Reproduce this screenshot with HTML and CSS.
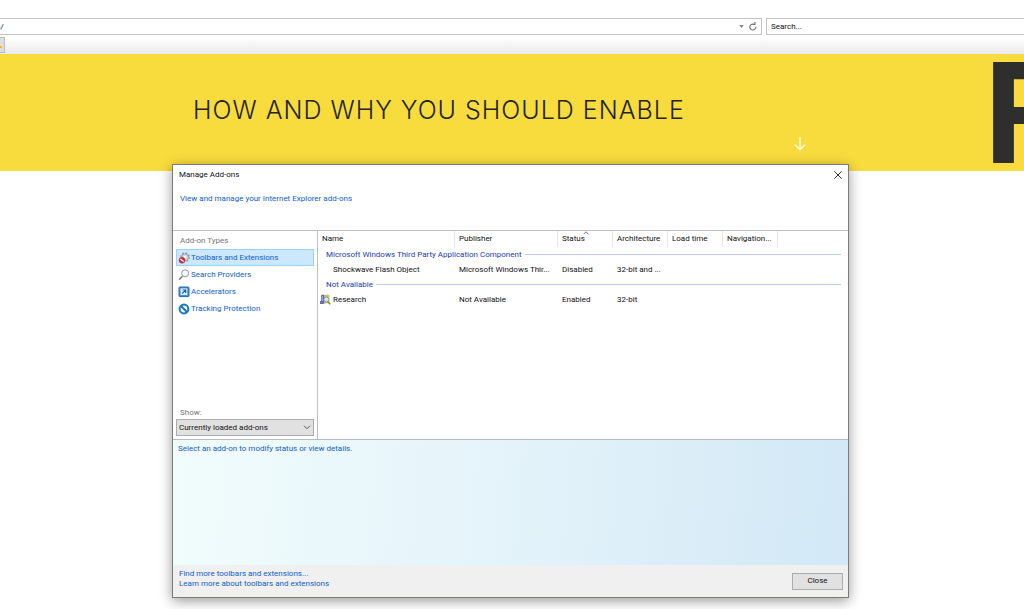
FILE: index.html
```
<!DOCTYPE html>
<html lang="en">
<head>
<meta charset="utf-8">
<title>Manage Add-ons</title>
<link rel="stylesheet" href="styles.css">
</head>
<body>
<header class="browser">
  <div class="bars">
    <div class="address">
      <input class="field address-input" type="text" value="n/" aria-label="Address">
      <button class="bar-button" type="button" aria-label="Show address history"><svg width="5" height="3" viewBox="0 0 6 4"><path d="M0 0h6L3 4z" fill="#858585"/></svg></button>
      <button class="bar-button" type="button" aria-label="Refresh"><svg width="8" height="9" viewBox="0 0 9 10" fill="none" stroke="#747474" stroke-width="1.3"><path d="M7.7 5.2A3.4 3.4 0 1 1 6 2.6"/><path d="M3.8 2.8h2.9V0" /></svg></button>
    </div>
    <input class="field search" type="text" value="Search..." aria-label="Search">
  </div>
  <div class="tabs"><button class="tab" type="button" aria-label="Tab"><span class="tab-mark"></span></button></div>
</header>
<main>
  <section class="hero">
    <h1 class="hero-title">HOW AND WHY YOU SHOULD ENABLE</h1>
    <svg class="hero-arrow" width="12" height="14" viewBox="0 0 12 14" fill="none" stroke="#fffbe0" stroke-width="1.5"><path d="M6 0v13M1 7.8l5 5 5-5"/></svg>
    <div class="hero-letter">F</div>
  </section>
</main>

<section class="dialog" role="dialog" aria-labelledby="dialog-title">
  <div class="titlebar">
    <h2 class="title" id="dialog-title">Manage Add-ons</h2>
    <button class="dismiss" type="button" aria-label="Close window"><svg width="8" height="8" viewBox="0 0 8 8" stroke="#333" stroke-width="1"><path d="M.3.3l7.4 7.4M7.7.3L.3 7.7"/></svg></button>
  </div>
  <div class="intro"><a href="#">View and manage your Internet Explorer add-ons</a></div>
  <div class="content">
    <nav class="sidebar">
      <h3 class="caption">Add-on Types</h3>
      <a class="type selected" href="#">
        <svg width="12" height="12" viewBox="0 0 12 12"><circle cx="7" cy="5.2" r="4.2" fill="none" stroke="#8b949b" stroke-width="1.4" stroke-dasharray="1.7 1.6"/><circle cx="7" cy="5.2" r="3.4" fill="#d5dadd" stroke="#899198" stroke-width=".8"/><circle cx="7" cy="5" r="1.2" fill="#fff"/><circle cx="4" cy="8.2" r="3" fill="#d42b31" stroke="#b9373f" stroke-width=".6"/><path d="M2.3 7l3.4 2.5" stroke="#fff" stroke-width="1.3"/></svg>
        Toolbars and Extensions</a>
      <a class="type" href="#">
        <svg width="12" height="12" viewBox="0 0 12 12"><path d="M4.6 7.1L1 10.6" stroke="#8b8581" stroke-width="1.7"/><circle cx="7.2" cy="4.3" r="3.5" fill="#f1f8fc" stroke="#8e989f" stroke-width="1"/><path d="M5.3 4.2A2 2 0 0 1 7.4 2.2" fill="none" stroke="#fff"/></svg>
        Search Providers</a>
      <a class="type" href="#">
        <svg width="12" height="12" viewBox="0 0 12 12"><rect x="1" y="1" width="10" height="9.6" rx="1" fill="#3e8fd7" stroke="#2267ad"/><rect x="2.5" y="2.4" width="6.8" height="6.6" fill="#dceffe"/><path d="M4 7.7l3.4-3.4M4.7 4h3v3" fill="none" stroke="#1761aa" stroke-width="1.2"/></svg>
        Accelerators</a>
      <a class="type" href="#">
        <svg width="12" height="12" viewBox="0 0 12 12"><circle cx="6" cy="6" r="4.4" fill="#f5fbff" stroke="#1477c4" stroke-width="2"/><path d="M3 3l6 6" stroke="#1477c4" stroke-width="2"/></svg>
        Tracking Protection</a>
      <label class="caption show" for="show">Show:</label>
      <div class="picker">
        <select id="show"><option>Currently loaded add-ons</option></select>
        <svg class="chevron" width="8" height="5" viewBox="0 0 8 5" fill="none" stroke="#555"><path d="M1 .7l3 3 3-3"/></svg>
      </div>
    </nav>
    <div class="list">
      <table>
        <colgroup><col class="c-name"><col class="c-publisher"><col class="c-short"><col class="c-short"><col class="c-short"><col class="c-short"><col></colgroup>
        <thead>
          <tr><th>Name</th><th>Publisher</th><th class="sorted">Status<svg class="sort" width="6" height="4" viewBox="0 0 6 4" fill="none" stroke="#777"><path d="M.5 3.3L3 .8l2.5 2.5"/></svg></th><th>Architecture</th><th>Load time</th><th>Navigation...</th><td></td></tr>
        </thead>
        <tbody>
          <tr><th class="group" colspan="7"><div class="group-line">Microsoft Windows Third Party Application Component</div></th></tr>
          <tr><td><div class="item">Shockwave Flash Object</div></td><td>Microsoft Windows Thir...</td><td>Disabled</td><td>32-bit and ...</td><td></td><td></td><td></td></tr>
          <tr><th class="group" colspan="7"><div class="group-line">Not Available</div></th></tr>
          <tr><td><div class="item"><svg class="item-icon" width="11" height="11" viewBox="0 0 11 11"><path d="M1 1.5l2-1 2 .8v8L3 10 1 9z" fill="#5f63b5"/><path d="M2.2 2v7" stroke="#b9bee9"/><path d="M4 1l4-.6 1.4 1V9L4 9.5z" fill="#d1bd62"/><path d="M0 7h3v3H0z" fill="#6c6eb4"/><path d="M7.7 7.5l2.5 2.7" stroke="#a78419" stroke-width="1.6"/><circle cx="6.3" cy="5.5" r="2.4" fill="#c9edf9" stroke="#7fa3b5"/></svg>Research</div></td><td>Not Available</td><td>Enabled</td><td>32-bit</td><td></td><td></td><td></td></tr>
        </tbody>
      </table>
    </div>
  </div>
  <div class="details">Select an add-on to modify status or view details.</div>
  <footer class="footer">
    <div class="links"><a href="#">Find more toolbars and extensions...</a><a href="#">Learn more about toolbars and extensions</a></div>
    <button class="close" type="button">Close</button>
  </footer>
</section>
</body>
</html>
```
FILE: styles.css
```
* { box-sizing: border-box; }
body { margin: 0; min-height: 100vh; overflow: hidden; position: relative; background: #fff; color: #111; font: 8px/10px Roboto, "Open Sans", sans-serif; }
button, input, select { font: inherit; color: inherit; margin: 0; border-radius: 0; }
a { color: #0f60cc; text-decoration: none; }
svg { display: block; flex: none; overflow: visible; }

.browser { padding-top: 18px; }
.bars { display: flex; gap: 4px; height: 17px; }
.address { display: flex; align-items: center; flex: 1; border: 1px solid #c4c4c4; border-left: 0; padding-right: 2px; }
.field { min-width: 0; background: #fff; }
.address-input { flex: 1; border: 0; padding: 0; text-indent: -4px; }
.search { width: 258px; border: 1px solid #c4c4c4; border-right: 0; padding: 0 4px; }
.bar-button { display: flex; align-items: center; justify-content: center; width: 12px; height: 12px; padding: 0; border: 0; background: none; }
.tabs { height: 19px; padding-top: 2px; background: linear-gradient(#fff 3px, #ececec 17px, #e6e9f2); }
.tab { display: block; width: 5px; height: 16px; padding: 4px 0 0; border: 1px solid #bdbdbd; border-left: 0; background: #dedede; }
.tab-mark { display: block; width: 2px; height: 2px; background: #f0b548; }

.hero { position: relative; height: 117px; overflow: hidden; padding: 38px 0 0 193px; background: #f8dc3d; }
.hero-title { margin: 0; font: 300 25px/36px Inter, "Open Sans", sans-serif; letter-spacing: 1px; color: #24241f; white-space: nowrap; }
.hero-arrow { position: absolute; top: 83px; right: 218px; }
.hero-letter { position: absolute; top: 0; right: -54px; width: 94px; font: 700 139px/117px Inter, sans-serif; color: #2e2e2c; }

.dialog { position: absolute; top: 164px; left: 172px; right: 175px; display: flex; flex-direction: column; border: 1px solid #7c7c76; background: #fff; box-shadow: 0 3px 12px rgba(0, 0, 0, .4); }
.titlebar { display: flex; align-items: center; justify-content: space-between; height: 19px; padding: 0 6px; }
.title { margin: 0; font-size: 8px; font-weight: 400; }
.dismiss { padding: 0; border: 0; background: none; }
.intro { height: 47px; padding: 10px 7px; border-bottom: 1px solid #bfbfbf; }
.content { display: flex; min-height: 208px; }
.sidebar { display: flex; flex-direction: column; width: 145px; padding: 5px 3px 3px; border-right: 1px solid #bfbfbf; }
.caption { margin: 0 0 3px; padding-left: 4px; font-size: 8px; font-weight: 400; color: #757575; }
.type { display: flex; align-items: center; gap: 1px; height: 17px; padding-left: 1px; border: 1px solid transparent; white-space: nowrap; }
.selected { border-color: #99d1ff; background: #cce8ff; }
.show { margin: auto 0 1px; }
.picker { position: relative; }
.picker select { display: block; width: 100%; height: 17px; padding: 0 2px; appearance: none; border: 1px solid #adadad; background: #e1e1e1; }
.chevron { position: absolute; top: 6px; right: 3px; pointer-events: none; }

.list { flex: 1; min-width: 0; }
table { width: 100%; table-layout: fixed; border-collapse: separate; border-spacing: 0; }
.c-name { width: 137px; }
.c-publisher { width: 103px; }
.c-short { width: 55px; }
th, td { height: 15px; padding: 0 0 0 4px; text-align: left; font-weight: 400; white-space: nowrap; }
thead th { height: 16px; border-right: 1px solid #e5e5e5; }
.sorted { position: relative; }
.sort { position: absolute; top: 0; left: 25px; }
.group { padding: 0 7px 0 8px; color: #1c3dad; }
.group-line { display: flex; align-items: center; gap: 3px; }
.group-line::after { content: ""; flex: 1; height: 1px; background: #c0cdea; }
.item { position: relative; padding-left: 11px; }
.item-icon { position: absolute; top: -1px; left: -2px; }

.details { height: 126px; padding: 4px 5px; border-top: 1px solid #b6bdc0; background: linear-gradient(95deg, #f1fcfc, #e5f4fa 45%, #d2e8f6); color: #0f60cc; }
.footer { display: flex; align-items: center; justify-content: space-between; height: 32px; padding: 0 5px 0 6px; background: #f0f0f0; }
.links { display: flex; flex-direction: column; padding-bottom: 5px; }
.close { width: 51px; height: 17px; padding: 0; border: 1px solid #adadad; background: #e1e1e1; }
```
